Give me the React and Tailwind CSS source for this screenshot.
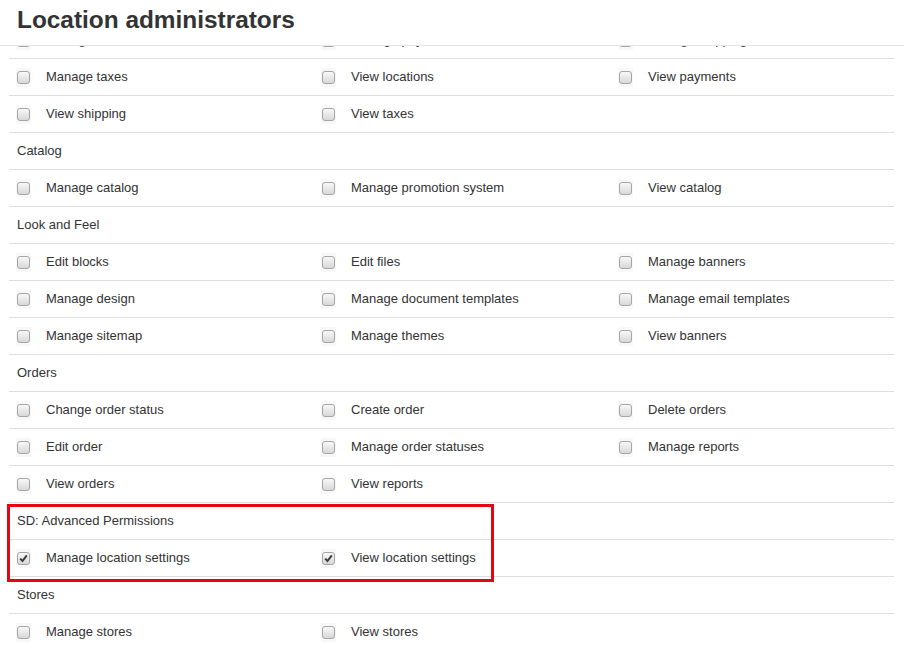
import React from "react";

const sections = [
  { rows: [["Manage locations", "Manage payments", "Manage shipping"]] },
  {
    rows: [
      ["Manage taxes", "View locations", "View payments"],
      ["View shipping", "View taxes"],
    ],
  },
  {
    title: "Catalog",
    rows: [["Manage catalog", "Manage promotion system", "View catalog"]],
  },
  {
    title: "Look and Feel",
    rows: [
      ["Edit blocks", "Edit files", "Manage banners"],
      ["Manage design", "Manage document templates", "Manage email templates"],
      ["Manage sitemap", "Manage themes", "View banners"],
    ],
  },
  {
    title: "Orders",
    rows: [
      ["Change order status", "Create order", "Delete orders"],
      ["Edit order", "Manage order statuses", "Manage reports"],
      ["View orders", "View reports"],
    ],
  },
  {
    title: "SD: Advanced Permissions",
    checked: true,
    rows: [["Manage location settings", "View location settings"]],
  },
  { title: "Stores", rows: [["Manage stores", "View stores"]] },
];

function Check({ checked }) {
  return (
    <span className="flex h-[19px] w-[15px] items-center justify-center bg-[#f8f8f8]">
      <span className="flex h-[13px] w-[13px] items-center justify-center rounded-[3px] border border-[#a5a5a5] bg-gradient-to-b from-[#f8f8f8] to-[#d8d8d8]">
        {checked && (
          <svg width="9" height="9" viewBox="0 0 9 9">
            <path d="M1.2 4.6 L3.5 7 L7.8 1.4" fill="none" stroke="#3a3a3a" strokeWidth="2" />
          </svg>
        )}
      </span>
    </span>
  );
}

function Row({ items, checked }) {
  return (
    <div className="grid h-[37px] grid-cols-[305px_297px_1fr] items-center border-b border-[#dedede]">
      {items.map((t) => (
        <div key={t} className="flex items-center pl-[7px]">
          <Check checked={checked} />
          <span className="ml-[15px]">{t}</span>
        </div>
      ))}
    </div>
  );
}

export default function App() {
  return (
    <div
      className="relative h-[648px] w-[904px] overflow-hidden bg-white text-[13px] text-[#333]"
      style={{ fontFamily: '"Liberation Sans", Arial, sans-serif' }}
    >
      <div className="absolute inset-x-0 top-0 z-10 flex h-[46px] items-start border-b border-[#e6e6e6] bg-white px-[17px] pt-[4px]">
        <h1 className="text-[24.4px] font-bold leading-[32px] text-[#333]">Location administrators</h1>
      </div>

      <div className="ml-[9px] mr-[10px] pt-[22px]">
        {sections.map((s, i) => (
          <div key={i}>
            {s.title && (
              <div className="flex h-[37px] items-center border-b border-[#dedede] pl-[8px]">{s.title}</div>
            )}
            {s.rows.map((r, j) => (
              <Row key={j} items={r} checked={s.checked} />
            ))}
          </div>
        ))}
      </div>

      <div className="pointer-events-none absolute left-[7px] top-[504px] h-[78px] w-[487px] border-[3px] border-[#e30613]" />
    </div>
  );
}
